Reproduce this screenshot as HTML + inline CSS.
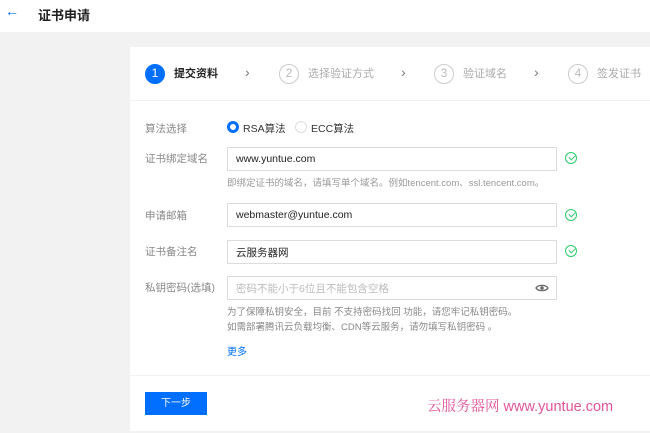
<!DOCTYPE html>
<html><head><meta charset="utf-8"><style>
*{margin:0;padding:0;box-sizing:border-box}
body{width:650px;height:433px;background:#f2f2f2;font-family:"Liberation Sans","Noto Sans CJK SC",sans-serif;position:relative;overflow:hidden;font-size:10px;color:#333}
.abs{position:absolute}
.hdr{left:0;top:0;width:650px;height:32px;background:#fff}
.card{left:130px;top:47px;width:520px;height:384px;background:#fff}
.lbl{left:145px;color:#888;font-size:10.5px;line-height:12px}
.inp{left:227px;width:330px;height:24px;border:1px solid #dcdcdc;background:#fff;padding-left:8px;display:flex;align-items:center;font-size:10.5px;color:#222}
.chk{left:565px;width:12px;height:12px;border:1.5px solid #29cc6a;border-radius:50%}
.chk:after{content:"";position:absolute;left:2.5px;top:1.5px;width:5px;height:3px;border-left:1.5px solid #29cc6a;border-bottom:1.5px solid #29cc6a;transform:rotate(-45deg)}
.step{top:64px;width:20px;height:20px;border-radius:50%;border:1.5px solid #ccc;color:#bbb;font-size:12px;text-align:center;line-height:17px}
.st{top:67px;font-size:11px;color:#aaa;line-height:14px}
.arr{top:64px;font-size:14px;color:#777}
.hint{left:227px;color:#999;font-size:9.5px;line-height:12px}
</style></head><body>
<div class="abs hdr"></div>
<div class="abs" style="left:5px;top:3px;color:#006eff;font-size:14px">←</div>
<div class="abs" style="left:38px;top:5px;font-size:13px;font-weight:bold;color:#222">证书申请</div>
<div class="abs card"></div>
<div class="abs" style="left:130px;top:100px;width:520px;height:1px;background:#f0f0f0"></div>
<div class="abs step" style="left:145px;background:#006eff;border-color:#006eff;color:#fff">1</div>
<div class="abs st" style="left:174px;color:#222;font-weight:bold">提交资料</div>
<div class="abs arr" style="left:245px">›</div>
<div class="abs step" style="left:279px">2</div>
<div class="abs st" style="left:308px">选择验证方式</div>
<div class="abs arr" style="left:401px">›</div>
<div class="abs step" style="left:434px">3</div>
<div class="abs st" style="left:463px">验证域名</div>
<div class="abs arr" style="left:534px">›</div>
<div class="abs step" style="left:568px">4</div>
<div class="abs st" style="left:597px">签发证书</div>

<div class="abs lbl" style="top:123px">算法选择</div>
<div class="abs" style="left:227px;top:121px;width:12px;height:12px;border-radius:50%;border:3.5px solid #006eff"></div>
<div class="abs" style="left:243px;top:121px;font-size:10.5px">RSA算法</div>
<div class="abs" style="left:295px;top:121px;width:12px;height:12px;border-radius:50%;border:1px solid #ddd"></div>
<div class="abs" style="left:311px;top:121px;font-size:10.5px">ECC算法</div>

<div class="abs lbl" style="top:153px">证书绑定域名</div>
<div class="abs inp" style="top:147px">www.yuntue.com</div>
<div class="abs chk" style="top:152px"></div>
<div class="abs hint" style="top:178px">即绑定证书的域名，请填写单个域名。例如tencent.com、ssl.tencent.com。</div>

<div class="abs lbl" style="top:210px">申请邮箱</div>
<div class="abs inp" style="top:203px">webmaster@yuntue.com</div>
<div class="abs chk" style="top:209px"></div>

<div class="abs lbl" style="top:246px">证书备注名</div>
<div class="abs inp" style="top:240px">云服务器网</div>
<div class="abs chk" style="top:245px"></div>

<div class="abs lbl" style="top:282px">私钥密码(选填)</div>
<div class="abs inp" style="top:276px;color:#bbb">密码不能小于6位且不能包含空格</div>
<svg class="abs" style="left:535px;top:283px" width="14" height="10" viewBox="0 0 14 10"><path d="M1 5C3 1.5 11 1.5 13 5C11 8.5 3 8.5 1 5Z" fill="none" stroke="#666" stroke-width="1.3"/><circle cx="7" cy="5" r="1.8" fill="#666"/></svg>
<div class="abs hint" style="top:307px;color:#888">为了保障私钥安全，目前 不支持密码找回 功能，请您牢记私钥密码。</div>
<div class="abs hint" style="top:322px;color:#888">如需部署腾讯云负载均衡、CDN等云服务，请勿填写私钥密码 。</div>
<div class="abs" style="left:227px;top:343px;color:#006eff;font-size:10px">更多</div>

<div class="abs" style="left:130px;top:375px;width:520px;height:1px;background:#f0f0f0"></div>
<div class="abs" style="left:145px;top:392px;width:62px;height:23px;background:#006eff;color:#fff;text-align:center;line-height:23px;font-size:10px">下一步</div>
<div class="abs" style="left:427px;top:395px;color:#e0559a;font-size:14.5px;font-family:'Liberation Sans','Noto Serif CJK SC',sans-serif">云服务器网 www.yuntue.com</div>
</body></html>
